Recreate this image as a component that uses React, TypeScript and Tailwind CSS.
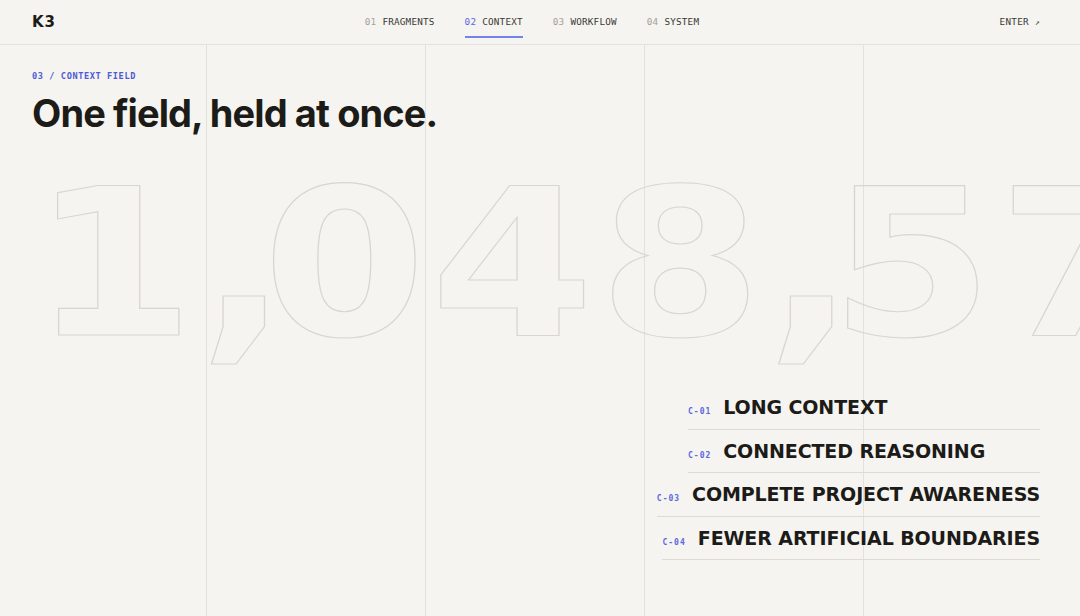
import { Fragment } from "react";

const NAV = [
  { n: "01", label: "FRAGMENTS" },
  { n: "02", label: "CONTEXT", active: true },
  { n: "03", label: "WORKFLOW" },
  { n: "04", label: "SYSTEM" },
];

const FEATURES = [
  { code: "C-01", title: "LONG CONTEXT" },
  { code: "C-02", title: "CONNECTED REASONING" },
  { code: "C-03", title: "COMPLETE PROJECT AWARENESS" },
  { code: "C-04", title: "FEWER ARTIFICIAL BOUNDARIES" },
];

const mono = "font-['DejaVu_Sans_Mono','Liberation_Mono',monospace]";
const wide = "font-['DejaVu_Sans','Liberation_Sans',sans-serif]";

// outlined token counter, stretched a little to get the extended look
function BigNumber({ value }: { value: string }) {
  return (
    <div
      className={`${wide} inline-block origin-left scale-x-[1.15] whitespace-nowrap font-bold text-[205px] leading-[205px] text-transparent [-webkit-text-stroke:1.1px_#d9d6d0] tracking-[3.5px] -ml-[1px]`}
    >
      {value.split("").map((ch, i) =>
        ch === "," ? (
          <span key={i} className="tracking-[-23px]">
            {ch}
          </span>
        ) : (
          <Fragment key={i}>{ch}</Fragment>
        )
      )}
    </div>
  );
}

export default function App() {
  return (
    <div className="relative w-full h-[616px] overflow-hidden bg-[#f5f4f0] text-[#1c1b18]">
      {/* column rules behind the content */}
      <div className="absolute inset-x-0 top-[44px] bottom-0 pointer-events-none grid grid-cols-[207px_219px_219px_219px_1fr]">
        <div className="border-r border-[#e3e1dc]" />
        <div className="border-r border-[#e3e1dc]" />
        <div className="border-r border-[#e3e1dc]" />
        <div className="border-r border-[#e3e1dc]" />
        <div />
      </div>

      <header className="relative h-[45px] flex items-center justify-between pl-8 pr-10 border-b border-[#e3e1dc]">
        <div className={`${wide} font-bold text-[15px] tracking-[1px] w-[120px]`}>K3</div>
        <nav className={`${mono} flex items-center gap-[30px] text-[9.3px] tracking-[0.2px] -ml-[8px]`}>
          {NAV.map((item) => (
            <div key={item.n} className="relative flex gap-[6px]">
              <span className={item.active ? "text-[#5a67e0]" : "text-[#a3a099]"}>{item.n}</span>
              <span className="text-[#3b3934]">{item.label}</span>
              {item.active && (
                <div className="absolute left-0 right-0 -bottom-[9px] h-[2px] bg-[#7482ee]" />
              )}
            </div>
          ))}
        </nav>
        <div className={`${mono} w-[120px] text-right text-[9.3px] tracking-[0.3px] text-[#3b3934]`}>
          ENTER <span className="text-[8px]">↗</span>
        </div>
      </header>

      <main className="relative pl-8 pr-10 pt-[25px]">
        <div className={`${mono} font-bold text-[8.6px] leading-[12px] tracking-[0.6px] text-[#4d5bd8]`}>
          03 / CONTEXT FIELD
        </div>
        <h1 className="mt-[12px] font-['Inter',sans-serif] font-bold text-[38px] leading-[38px] tracking-[-0.9px]">
          One field, held at once.
        </h1>

        <div className="mt-[30px]">
          <BigNumber value="1,048,576" />
        </div>

        <div className="mt-[19px] flex flex-col items-end">
          {FEATURES.map((f) => (
            <div
              key={f.code}
              className="min-w-[352px] h-[43.5px] flex items-center border-b border-[#dedbd5]"
            >
              <div className="flex items-baseline gap-3">
                <span className={`${mono} whitespace-nowrap font-bold text-[8px] tracking-[1px] text-[#5a67e0]`}>
                  {f.code}
                </span>
                <span className={`${wide} whitespace-nowrap font-bold text-[19px] tracking-[-0.1px] text-[#1c1b18]`}>
                  {f.title}
                </span>
              </div>
            </div>
          ))}
        </div>
      </main>
    </div>
  );
}
